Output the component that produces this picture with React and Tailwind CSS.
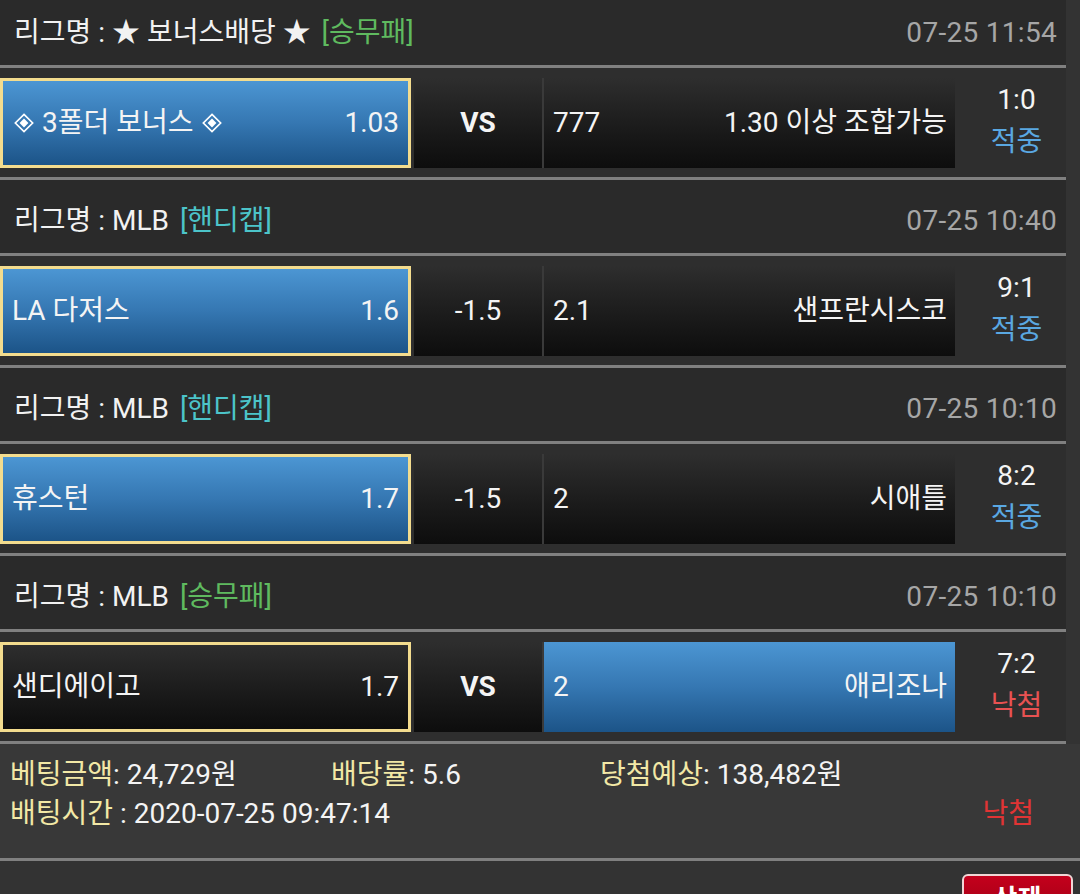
import React from "react";

const games = [
  {
    league: "★ 보너스배당 ★",
    type: "승무패",
    time: "07-25 11:54",
    home: "3폴더 보너스",
    bonus: true,
    homeOdds: "1.03",
    mid: "VS",
    awayOdds: "777",
    away: "1.30 이상 조합가능",
    pick: "home",
    score: "1:0",
    result: "적중",
  },
  {
    league: "MLB",
    type: "핸디캡",
    time: "07-25 10:40",
    home: "LA 다저스",
    homeOdds: "1.6",
    mid: "-1.5",
    awayOdds: "2.1",
    away: "샌프란시스코",
    pick: "home",
    score: "9:1",
    result: "적중",
  },
  {
    league: "MLB",
    type: "핸디캡",
    time: "07-25 10:10",
    home: "휴스턴",
    homeOdds: "1.7",
    mid: "-1.5",
    awayOdds: "2",
    away: "시애틀",
    pick: "home",
    score: "8:2",
    result: "적중",
  },
  {
    league: "MLB",
    type: "승무패",
    time: "07-25 10:10",
    home: "샌디에이고",
    homeOdds: "1.7",
    mid: "VS",
    awayOdds: "2",
    away: "애리조나",
    pick: "away",
    score: "7:2",
    result: "낙첨",
  },
];

const blue = "bg-gradient-to-b from-[#4c96d3] via-[#3577b2] to-[#1c5488]";
const dark = "bg-gradient-to-b from-[#2e2e2e] to-[#0d0d0d]";

const Diamond = ({ className }) => (
  <svg width="20" height="20" viewBox="0 0 18 18" className={`shrink-0 inline-block ${className}`}>
    <path d="M9 1.2 L16.8 9 L9 16.8 L1.2 9 Z" fill="none" stroke="#fff" strokeWidth="1.5" />
    <path d="M9 5 L13 9 L9 13 L5 9 Z" fill="#fff" />
  </svg>
);

const GameBlock = ({ g }) => {
  const homeBlue = g.pick === "home";
  const awayBlue = g.pick === "away";
  return (
    <div>
      <div className="h-[73px] bg-[#2a2a2a] flex items-center justify-between pl-[14px] pr-[9px] pt-[9px]">
        <p className="text-[#f2f2f2]">
          리그명 : {g.league}{" "}
          <span className={g.type === "승무패" ? "text-[#5fba5f] ml-1" : "text-[#4cc4c9] ml-1"}>
            [{g.type}]
          </span>
        </p>
        <p className="text-[#a6a6a6] tracking-[0.3px]">{g.time}</p>
      </div>
      <div className="h-[3px] bg-[#808080]" />
      <div className="h-[109px] bg-[#2e2e2e] pt-[10px] flex">
        <div
          className={`w-[411px] h-[90px] border-[3px] border-[#f3dc8e] flex items-center justify-between pl-[9px] pr-[9px] ${
            homeBlue ? blue : dark
          }`}
        >
          {g.bonus ? (
            <span className="flex items-center">
              <Diamond className="ml-[2px] mr-[8px]" />
              {g.home}
              <Diamond className="ml-[9px]" />
            </span>
          ) : (
            <span>{g.home}</span>
          )}
          <span>{g.homeOdds}</span>
        </div>
        <div
          className={`ml-[3px] w-[128px] h-[90px] flex items-center justify-center ${dark} ${
            g.mid === "VS" ? "font-bold" : ""
          }`}
        >
          {g.mid}
        </div>
        <div className="w-[2px] h-[90px] bg-[#3a3a3a]" />
        <div
          className={`w-[411px] h-[90px] flex items-center justify-between pl-[9px] pr-[8px] ${
            awayBlue ? blue : dark
          }`}
        >
          <span>{g.awayOdds}</span>
          <span>{g.away}</span>
        </div>
        <div className="flex-1 h-[90px] flex flex-col items-center justify-center pl-[12px] pb-[4px] leading-[42px]">
          <span>{g.score}</span>
          <span className={g.result === "적중" ? "text-[#5aa8e2]" : "text-[#e85252]"}>
            {g.result}
          </span>
        </div>
      </div>
      <div className="h-[3px] bg-[#808080]" />
    </div>
  );
};

const App = () => {
  return (
    <div
      className="w-[1080px] h-[894px] overflow-hidden bg-[#333333] text-[28px] text-[#f4f4f4]"
      style={{ fontFamily: "Roboto, 'Noto Sans CJK KR', sans-serif" }}
    >
      <div className="w-[1066px] -mt-2">
        {games.map((g, i) => (
          <GameBlock key={i} g={g} />
        ))}
      </div>
      <div className="h-[114px] bg-[#383838] px-[10px] pt-[11px] leading-[39px]">
        <div className="flex">
          <p className="w-[321px]">
            <span className="text-[#f2e8a6]">베팅금액</span>: 24,729원
          </p>
          <p className="w-[269px]">
            <span className="text-[#f2e8a6]">배당률</span>: 5.6
          </p>
          <p>
            <span className="text-[#f2e8a6]">당첨예상</span>: 138,482원
          </p>
        </div>
        <div className="flex justify-between pr-[36px]">
          <p>
            <span className="text-[#f2e8a6]">배팅시간</span> : 2020-07-25 09:47:14
          </p>
          <p className="text-[#e03434]">낙첨</p>
        </div>
      </div>
      <div className="h-[3px] bg-[#808080]" />
      <div className="h-[60px] bg-[#333333] flex justify-end pr-[7px] pt-[13px]">
        <button className="w-[111px] h-[50px] rounded-[6px] border-2 border-[#f1d6d6] bg-gradient-to-b from-[#c4001c] to-[#9a0014] text-white text-[26px] font-bold leading-[44px]">
          삭제
        </button>
      </div>
    </div>
  );
};

export default App;
